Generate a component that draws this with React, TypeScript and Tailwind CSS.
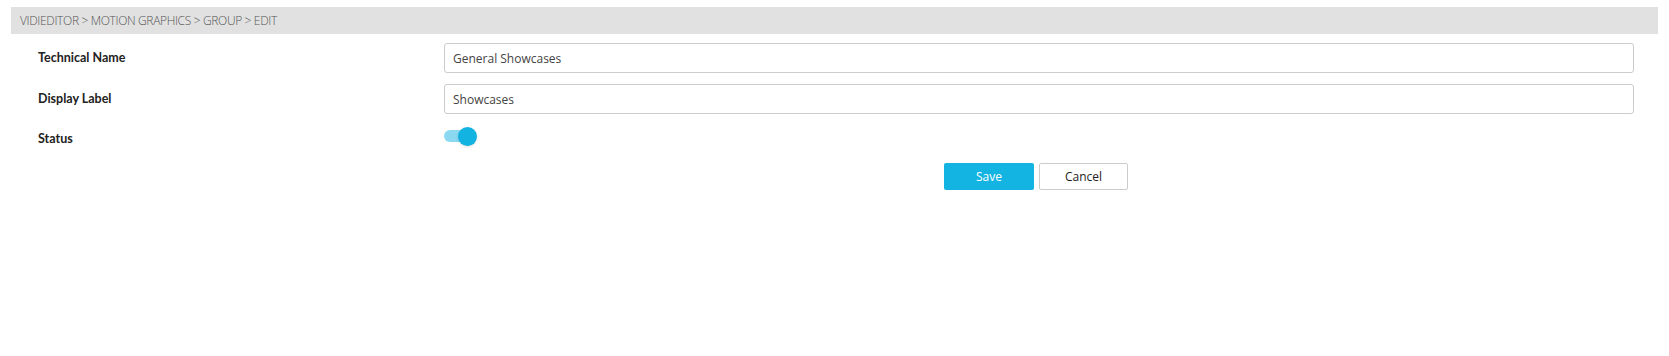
import { useState } from 'react';

const font = { fontFamily: '"Open Sans", "Noto Sans", Arial, sans-serif' };
const labelFont = { fontFamily: 'Lato, "Open Sans", Arial, sans-serif' };

const GroupEdit = () => {
  const [technicalName, setTechnicalName] = useState('General Showcases');
  const [displayLabel, setDisplayLabel] = useState('Showcases');
  const [active, setActive] = useState(true);

  return (
    <div className="min-h-[356px] bg-white pt-[7px] px-[11px] text-[#333]" style={font}>
      <div className="h-[27px] bg-[#e1e1e1] flex items-center pl-[9px] text-[12px] font-light text-[#555] tracking-[-0.35px]">
        VIDIEDITOR &gt; MOTION GRAPHICS &gt; GROUP &gt; EDIT
      </div>

      <form className="pt-[9px] flex flex-col" onSubmit={(e) => e.preventDefault()}>
        <div className="flex items-center h-[30px]">
          <label className="w-[433px] pl-[27px] text-[12.5px] font-bold text-[#222]" style={labelFont}>
            Technical Name
          </label>
          <input
            value={technicalName}
            onChange={(e) => setTechnicalName(e.target.value)}
            className="w-[1190px] h-[30px] rounded-[3px] border border-[#ccc] px-[8px] text-[12px] text-[#444] outline-none"
          />
        </div>

        <div className="flex items-center h-[30px] mt-[11px]">
          <label className="w-[433px] pl-[27px] text-[12.5px] font-bold text-[#222]" style={labelFont}>
            Display Label
          </label>
          <input
            value={displayLabel}
            onChange={(e) => setDisplayLabel(e.target.value)}
            className="w-[1190px] h-[30px] rounded-[3px] border border-[#ccc] px-[8px] text-[12px] text-[#444] outline-none"
          />
        </div>

        <div className="flex items-center h-[22px] mt-[11px]">
          <label className="w-[433px] pl-[27px] pt-[6px] text-[12.5px] font-bold text-[#222]" style={labelFont}>
            Status
          </label>
          <button
            type="button"
            onClick={() => setActive(!active)}
            className="relative w-[33px] h-[20px] flex items-center"
          >
            <span className={`block w-[28px] h-[12px] rounded-full ${active ? 'bg-[#8ad9f0]' : 'bg-[#ccc]'}`} />
            <span
              className={`absolute top-[1px] w-[19px] h-[19px] rounded-full shadow-sm ${
                active ? 'left-[14px] bg-[#13b3e1]' : 'left-0 bg-[#f5f5f5]'
              }`}
            />
          </button>
        </div>

        <div className="flex mt-[16px] pl-[933px] gap-[5px]">
          <button type="submit" className="w-[90px] h-[27px] rounded-[2px] bg-[#14b4e2] text-white text-[12px]">
            Save
          </button>
          <button type="button" className="w-[89px] h-[27px] rounded-[2px] border border-[#ccc] bg-white text-[#222] text-[12px]">
            Cancel
          </button>
        </div>
      </form>
    </div>
  );
};

export default function App() {
  return <GroupEdit />;
}
